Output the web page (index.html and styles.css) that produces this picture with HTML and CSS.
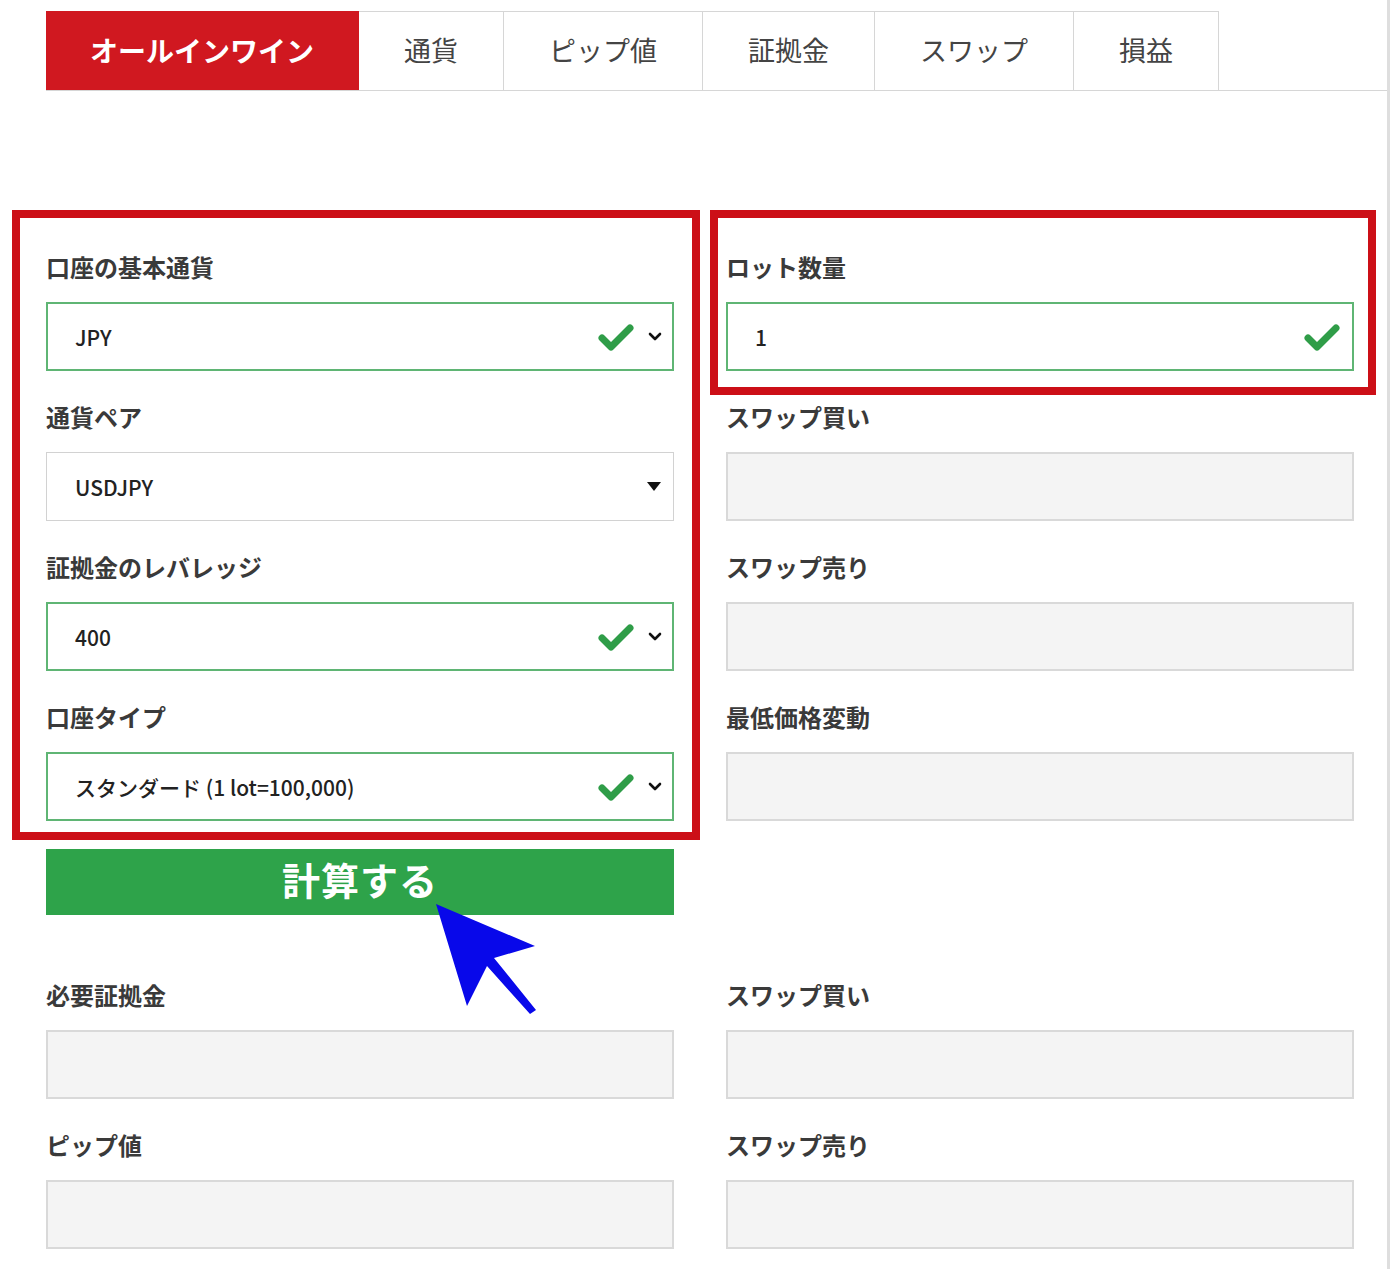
FILE: index.html
```html
<!DOCTYPE html>
<html lang="ja">
<head>
  <meta charset="UTF-8">
  <meta name="viewport" content="width=device-width, initial-scale=1.0">
  <title>オールインワイン計算ツール</title>
  <link rel="stylesheet" href="styles.css">
</head>
<body>
  <div class="page">

    <!-- Tabs -->
    <div class="tabs">
      <div class="tab active">オールインワイン</div>
      <div class="tab">通貨</div>
      <div class="tab">ピップ値</div>
      <div class="tab">証拠金</div>
      <div class="tab">スワップ</div>
      <div class="tab">損益</div>
    </div>

    <div class="calc">
      <div class="field">
        <label>口座の基本通貨</label>
        <div class="input valid">
          <span>JPY</span>
          <svg class="check" viewBox="0 0 36 30"><path d="M4 16 L13 25 L32 6"/></svg>
          <svg class="chevron" viewBox="0 0 14 9"><path d="M2 2 L7 7 L12 2"/></svg>
        </div>
      </div>
      <div class="field">
        <label>ロット数量</label>
        <div class="input valid plain">
          <span>1</span>
          <svg class="check" viewBox="0 0 36 30"><path d="M4 16 L13 25 L32 6"/></svg>
        </div>
      </div>

      <div class="field">
        <label>通貨ペア</label>
        <div class="input">
          <span>USDJPY</span>
          <svg class="caret" viewBox="0 0 14 9"><path d="M0 0 H14 L7 9 Z"/></svg>
        </div>
      </div>
      <div class="field">
        <label>スワップ買い</label>
        <div class="input readonly"></div>
      </div>

      <div class="field">
        <label>証拠金のレバレッジ</label>
        <div class="input valid">
          <span>400</span>
          <svg class="check" viewBox="0 0 36 30"><path d="M4 16 L13 25 L32 6"/></svg>
          <svg class="chevron" viewBox="0 0 14 9"><path d="M2 2 L7 7 L12 2"/></svg>
        </div>
      </div>
      <div class="field">
        <label>スワップ売り</label>
        <div class="input readonly"></div>
      </div>

      <div class="field">
        <label>口座タイプ</label>
        <div class="input valid">
          <span>スタンダード (1 lot=100,000)</span>
          <svg class="check" viewBox="0 0 36 30"><path d="M4 16 L13 25 L32 6"/></svg>
          <svg class="chevron" viewBox="0 0 14 9"><path d="M2 2 L7 7 L12 2"/></svg>
        </div>
      </div>
      <div class="field">
        <label>最低価格変動</label>
        <div class="input readonly"></div>
      </div>

      <button class="calc-btn">計算する</button>
      <div></div>

      <div class="field">
        <label>必要証拠金</label>
        <div class="input readonly"></div>
      </div>
      <div class="field">
        <label>スワップ買い</label>
        <div class="input readonly"></div>
      </div>

      <div class="field">
        <label>ピップ値</label>
        <div class="input readonly"></div>
      </div>
      <div class="field">
        <label>スワップ売り</label>
        <div class="input readonly"></div>
      </div>

      <!-- Annotation boxes -->
      <div class="mark mark-left"></div>
      <div class="mark mark-right"></div>

      <!-- Pointer arrow -->
      <svg class="pointer" viewBox="0 0 104 114">
        <polygon points="1,1 100,43 59,55 101,107 95,111 52,63 32,103"/>
      </svg>
    </div>

  </div>
</body>
</html>
```

FILE: styles.css
```css
body {
  margin: 0;
  background-color: #fff;
  font-family: "Noto Sans CJK JP", "Liberation Sans", sans-serif;
  color: #333;
}

.page {
  width: 1390px;
  min-height: 1269px;
  padding: 11px 0 0 46px;
  box-sizing: border-box;
  border-right: 3px solid #dedede;
}

/* Tabs */
.tabs {
  display: flex;
  height: 79px;
  border-bottom: 1px solid #d6d6d6;
}

.tab {
  display: flex;
  align-items: center;
  padding: 0 45px 3px;
  border-top: 1px solid #d6d6d6;
  border-right: 1px solid #d6d6d6;
  font-size: 27px;
  color: #444;
}

.tab.active {
  padding: 0 44px 3px;
  background-color: #d01820;
  border-color: #d01820;
  color: #fff;
  font-weight: 700;
  font-size: 28px;
}

/* Calculator grid */
.calc {
  position: relative;
  display: grid;
  grid-template-columns: 628px 628px;
  column-gap: 52px;
  row-gap: 28px;
  margin-top: 158px;
}

.field {
  display: flex;
  flex-direction: column;
}

.field label {
  height: 36px;
  line-height: 36px;
  margin-bottom: 17px;
  font-size: 24px;
  font-weight: 700;
  color: #3a3a3a;
}

.input {
  display: flex;
  align-items: center;
  height: 69px;
  box-sizing: border-box;
  padding: 0 10px 0 28px;
  border: 1px solid #d2d2d2;
  background-color: #fff;
  font-size: 21px;
  font-weight: 500;
  color: #222;
}

.input span {
  flex: 1;
}

.input.valid {
  border: 2px solid #5fb574;
  padding-left: 27px;
}

.input.plain {
  padding-right: 12px;
}

.input.plain .check {
  margin-right: 0;
}

.input.readonly {
  background-color: #f4f4f4;
  border: 2px solid #d9d9d9;
}

.check {
  width: 36px;
  height: 30px;
  margin-right: 14px;
}

.check path {
  fill: none;
  stroke: #2f9d48;
  stroke-width: 7;
  stroke-linecap: round;
  stroke-linejoin: round;
}

.chevron {
  width: 14px;
  height: 9px;
}

.chevron path {
  fill: none;
  stroke: #111;
  stroke-width: 2.6;
  stroke-linecap: round;
  stroke-linejoin: round;
}

.caret {
  width: 14px;
  height: 9px;
  margin-right: 2px;
}

.caret path {
  fill: #111;
}

.calc-btn {
  height: 66px;
  margin-bottom: 34px;
  padding: 0 0 8px;
  border: none;
  background-color: #2ea34a;
  color: #fff;
  font-family: "Noto Sans CJK JP", sans-serif;
  font-size: 38px;
  font-weight: 700;
  letter-spacing: 1px;
  cursor: pointer;
}

/* Red annotation frames */
.mark {
  position: absolute;
  top: -39px;
  border: 8px solid #cc0f17;
  box-sizing: border-box;
}

.mark-left {
  left: -34px;
  width: 688px;
  height: 630px;
}

.mark-right {
  left: 664px;
  width: 666px;
  height: 185px;
}

.pointer {
  position: absolute;
  left: 389px;
  top: 654px;
  width: 104px;
  height: 114px;
}

.pointer polygon {
  fill: #0808ea;
}
```
